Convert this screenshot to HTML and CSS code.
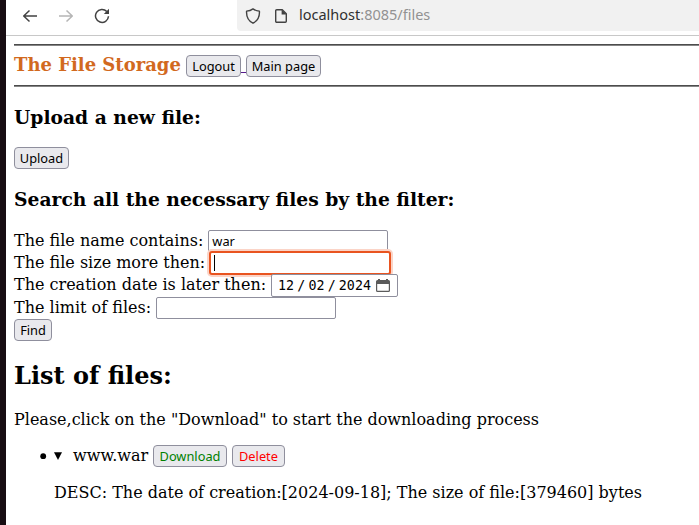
FILE: index.html
```html
<!DOCTYPE html>
<html lang="en">
<head>
<meta charset="utf-8">
<title>The File Storage</title>
<link rel="stylesheet" href="styles.css">
</head>
<body>
<div class="window">
  <nav class="toolbar">
    <div class="nav-icons">
      <svg width="16" height="16" viewBox="0 0 16 16" class="icon"><path d="M15 8H1.5M7.5 2.5 1.7 8l5.8 5.5"/></svg>
      <svg width="16" height="16" viewBox="0 0 16 16" class="icon faded"><path d="M1 8h13.5M8.5 2.5 14.3 8l-5.8 5.5"/></svg>
      <svg width="16" height="16" viewBox="0 0 16 16" class="icon"><path d="M12.8 3.5A6.5 6.5 0 1 0 14.5 8.3"/><path class="solid" d="M15 .8V6H9.8z"/></svg>
    </div>
    <div class="address">
      <svg width="16" height="16" viewBox="0 0 16 16" class="icon thin"><path d="M8 .9C6 2.4 3.800 3 1.600 3.100 1.200 8.500 3 12.700 8 15.200c5-2.500 6.800-6.700 6.400-12.100C12.200 3 10 2.400 8 .9z"/></svg>
      <svg width="12" height="14" viewBox="0 0 12 14" class="icon thin page-icon"><path d="M1.700.7h5.600l4 4v7.600a1 1 0 0 1-1 1H1.700a1 1 0 0 1-1-1V1.700a1 1 0 0 1 1-1z"/><path class="solid" d="M6.600.5v5h5z"/></svg>
      <span class="url">localhost<span class="path">:8085/files</span></span>
    </div>
  </nav>
  <main>
    <hr>
    <header>
      <b class="title">The File Storage</b>
      <button class="logout">Logout</button><span class="link-gap"></span><button class="main-page">Main page</button>
    </header>
    <hr>
    <h3>Upload a new file:</h3>
    <button class="upload">Upload</button>
    <h3 class="search">Search all the necessary files by the filter:</h3>
    <form>
      <div class="row"><label for="name">The file name contains:</label><input id="name" value="war"></div>
      <div class="row"><label for="size">The file size more then:</label><div class="focused" id="size"><i class="caret"></i></div></div>
      <div class="row date-row"><span class="date-label">The creation date is later then:</span>
        <div class="date"><span>12</span><span>/</span><span>02</span><span>/</span><span>2024</span>
          <svg width="14" height="13" viewBox="0 0 14 13"><path fill="#5b5b5b" fill-rule="evenodd" d="M2 1V0h2v1h6V0h2v1h.500Q14 1 14 2.500v9q0 1.500-1.500 1.500h-11Q0 13 0 11.500v-9Q0 1 1.500 1zM1.200 5v6.200q0 .6.600.6h10.400q.6 0 .6-.6V5z"/></svg>
        </div>
      </div>
      <div class="row"><label for="limit">The limit of files:</label><input id="limit"></div>
      <button type="button" class="find">Find</button>
    </form>
    <h2>List of files:</h2>
    <p class="hint">Please,click on the "Download" to start the downloading process</p>
    <div class="file">
      <svg class="marks" width="22" height="10" viewBox="0 0 22 10"><circle cx="3.200" cy="5.200" r="2.900"/><path d="M14 1.200h8L18 9z"/></svg>
      <span class="file-name">www.war</span>
      <button class="download">Download</button>
      <button class="delete">Delete</button>
    </div>
    <p class="desc">DESC: The date of creation:[2024-09-18]; The size of file:[379460] bytes</p>
  </main>
</div>
</body>
</html>
```
FILE: styles.css
```css
* { box-sizing: border-box; }
body { margin: 0; background: #170d12; font: 16px/22px "DejaVu Serif", serif; color: #000; }
.window { margin-left: 6px; height: 525px; background: #fff; overflow: hidden; }
.toolbar { height: 36px; display: flex; border-bottom: 1px solid #c8c8c8; }
.nav-icons { width: 231px; height: 31px; padding-left: 16px; display: flex; gap: 20px; align-items: center; }
.icon { fill: none; stroke: #424242; stroke-width: 1.5; stroke-linejoin: round; flex: none; }
.thin { stroke-width: 1.4; }
.faded { stroke: #b5b5b5; }
.solid { fill: #424242; stroke: none; }
.address { flex: 1; height: 31px; background: #f1f1f1; border-radius: 0 0 0 4px; display: flex; align-items: center; padding-left: 8px; }
.page-icon { margin-left: 14px; }
.url { margin: 0 0 2px 12px; font: 14.500px/29px "Noto Sans", sans-serif; color: #303030; white-space: nowrap; }
.path { color: #929292; }
main { padding: 8px 0 0 8px; }
hr { margin: 0; height: 2px; border: 0; border-top: 1px solid #4c4c4c; background: #858585; }
header { height: 39px; display: flex; align-items: center; }
.title { width: 172px; font-size: 18px; color: #d2691e; white-space: nowrap; padding-bottom: 1px; }
button { height: 22px; padding: 0; border: 1px solid #8f8f9d; border-radius: 4px; background: #e9e9ed; color: #000; font: 12.800px/20px "Noto Sans", sans-serif; white-space: nowrap; display: block; flex: none; }
.logout { width: 55px; }
.link-gap { width: 5px; height: 14px; border-bottom: 1px solid #551a8b; }
.main-page { width: 75px; }
h3 { margin: 19px 0 18px; font-size: 18.720px; line-height: 23px; white-space: nowrap; }
.upload { width: 55px; }
h3.search { margin: 19px 0; }
.row { height: 22px; display: flex; align-items: center; gap: 5px; white-space: nowrap; }
input { width: 180px; height: 22px; padding: 0 3px; border: 1px solid #8f8f9d; border-radius: 2px; background: #fff; font: 12.800px/20px "Noto Sans", sans-serif; }
.focused { width: 182px; height: 24px; margin: 0 0 0 -1px; border: 2px solid #e95420; border-radius: 3px; box-shadow: 0 0 0 2px #fbd4c7; background: #fff; padding: 2px 3px; }
.caret { display: block; width: 1px; height: 16px; background: #000; }
.row.date-row { height: 23px; position: relative; }
.date-label { padding-bottom: 2px; }
.date { width: 127px; height: 23px; padding: 0 7px 0 6px; border: 1px solid #8f8f9d; border-radius: 2px; background: #fff; display: flex; align-items: center; justify-content: space-between; font: 13.333px/21px "DejaVu Sans Mono", monospace; }
.date svg { margin-left: 2px; }
.find { width: 38px; }
h2 { margin: 21px 0 19px; font-size: 24px; line-height: 28px; }
.hint, .desc { margin: 0; white-space: nowrap; }
.file { display: flex; align-items: center; margin: 14px 0 15px 26px; height: 22px; }
.marks { margin-right: 11px; flex: none; }
.file-name { width: 80px; }
.download { width: 74px; color: #008000; }
.delete { width: 53px; margin-left: 5px; color: #f00; }
.desc { padding-left: 40px; }
```
